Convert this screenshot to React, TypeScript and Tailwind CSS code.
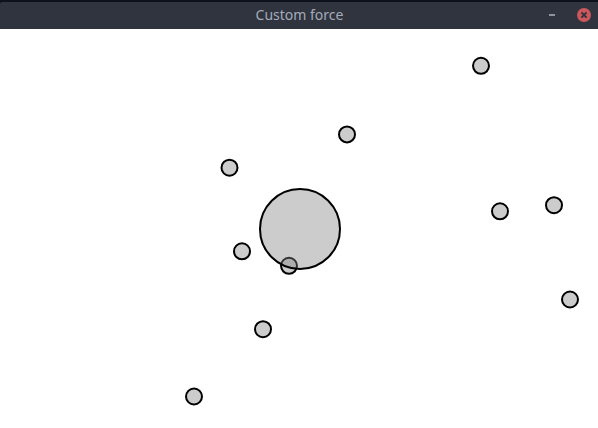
const particles = [
  { x: 481, y: 36.8 },
  { x: 347, y: 105.4 },
  { x: 229.5, y: 138.7 },
  { x: 500, y: 182.3 },
  { x: 554, y: 176.2 },
  { x: 242, y: 222.3 },
  { x: 289, y: 236.8 },
  { x: 570, y: 270.5 },
  { x: 263, y: 300.2 },
  { x: 194, y: 367.5 },
];

function TitleBar() {
  return (
    <header className="bg-[#0e1119] pt-[2px]">
      <div className="relative flex h-[27px] items-center justify-center rounded-tl-[2px] bg-[#2f343f]">
        <h1 className="pb-[2px] pl-px font-['Noto_Sans',sans-serif] text-[14px] leading-none font-normal text-[#a4abba]">
          Custom force
        </h1>
        <div className="absolute top-0 right-[7px] flex h-[26px] items-center gap-[22px]">
          <button aria-label="Minimize" className="h-[2px] w-[6px] bg-[#90939b]" />
          <button aria-label="Close" className="size-[14px]">
            <svg viewBox="0 0 14 14" className="block size-[14px]">
              <circle cx="7" cy="7" r="7" fill="#cc575d" />
              <path d="M4.4 4.4l5.2 5.2M9.6 4.4l-5.2 5.2" stroke="#2f343f" strokeWidth="2" />
            </svg>
          </button>
        </div>
      </div>
    </header>
  );
}

export default function App() {
  return (
    <div className="flex h-screen w-full flex-col overflow-hidden bg-white">
      <TitleBar />
      <svg viewBox="0 0 598 399" className="block h-[399px] w-[598px]">
        <g fill="#7f7f7f" fillOpacity="0.4" stroke="#000" strokeWidth="2">
          {particles.map((p) => (
            <circle key={`${p.x}-${p.y}`} cx={p.x} cy={p.y} r="8" />
          ))}
          <circle cx="300" cy="200" r="40" />
        </g>
      </svg>
    </div>
  );
}
